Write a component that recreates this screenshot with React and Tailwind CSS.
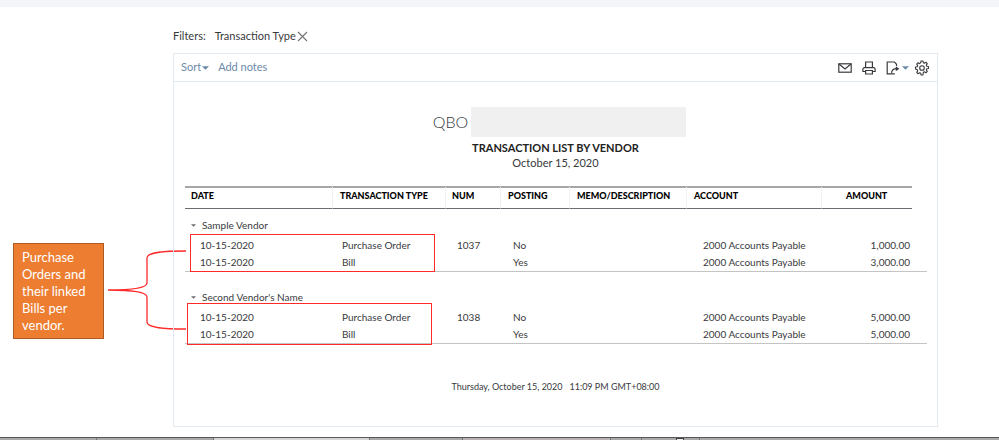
import React, { useState } from 'react';

const columns = [
  { key: 'date', label: 'DATE', width: 'w-[148px]', pad: 'pl-[6px]' },
  { key: 'type', label: 'TRANSACTION TYPE', width: 'w-[113px]', pad: 'pl-[7px]' },
  { key: 'num', label: 'NUM', width: 'w-[55px]', pad: 'pl-[6px]' },
  { key: 'posting', label: 'POSTING', width: 'w-[69px]', pad: 'pl-[7px]' },
  { key: 'memo', label: 'MEMO/DESCRIPTION', width: 'w-[117px]', pad: 'pl-[7px]' },
  { key: 'account', label: 'ACCOUNT', width: 'w-auto', pad: 'pl-[7px]' },
  { key: 'amount', label: 'AMOUNT', width: 'w-[90px]', pad: 'pl-[24px]' },
];

const vendors = [
  {
    name: 'Sample Vendor',
    labelPad: 'pt-2 pb-1',
    rows: [
      { date: '10-15-2020', type: 'Purchase Order', num: '1037', posting: 'No', account: '2000 Accounts Payable', amount: '1,000.00' },
      { date: '10-15-2020', type: 'Bill', num: '', posting: 'Yes', account: '2000 Accounts Payable', amount: '3,000.00' },
    ],
  },
  {
    name: "Second Vendor's Name",
    labelPad: 'pt-[17px] pb-1',
    rows: [
      { date: '10-15-2020', type: 'Purchase Order', num: '1038', posting: 'No', account: '2000 Accounts Payable', amount: '5,000.00' },
      { date: '10-15-2020', type: 'Bill', num: '', posting: 'Yes', account: '2000 Accounts Payable', amount: '5,000.00' },
    ],
  },
];

const Caret = ({ className }) => (
  <svg viewBox="0 0 8 4" className={className} aria-hidden="true">
    <path d="M0 0h8L4 4z" fill="currentColor" />
  </svg>
);

const MailIcon = () => (
  <svg width="14" height="10" viewBox="0 0 14 10" fill="none" stroke="currentColor" strokeWidth="1.2">
    <rect x="0.8" y="0.8" width="12.4" height="8.4" />
    <path d="M1 1l6 5 6-5" />
  </svg>
);

const PrintIcon = () => (
  <svg width="14" height="14" viewBox="0 0 14 14" fill="none" stroke="currentColor" strokeWidth="1.2">
    <path d="M3.600 6.500V1h6.800v5.500" />
    <path d="M3 10.500H.9V8.200a1.600 1.600 0 0 1 1.600-1.600h9a1.600 1.600 0 0 1 1.600 1.600v2.300H11" />
    <path d="M3.600 9.500h6.800V13H3.600z" />
  </svg>
);

const ExportIcon = () => (
  <svg width="14" height="14" viewBox="0 0 14 14" fill="none" stroke="currentColor" strokeWidth="1.2">
    <path d="M10.500 5V3.200L8.400 1H1.200v11.800h7.500" />
    <path d="M5.500 11.800c.4-2.800 2.200-4 5-4.100" />
    <path d="M9.800 5.200l3.600 2.500-3.600 2.500z" fill="currentColor" stroke="none" />
  </svg>
);

const GearIcon = () => (
  <svg width="16" height="16" viewBox="0 0 16 16" fill="none" stroke="currentColor" strokeWidth="1.1" strokeLinejoin="round">
    <path d="M6.700 2.700L7 1h2l.3 1.700 1.100.5 1.500-1 1.400 1.400-1 1.500.5 1.200 1.700.2v2l-1.700.3-.5 1.200 1 1.400-1.400 1.400-1.500-1-1.100.5L9 15H7l-.3-1.700-1.100-.5-1.500 1-1.400-1.400 1-1.400-.5-1.200L1.500 9V7l1.700-.2.500-1.200-1-1.500 1.400-1.400 1.500 1z" />
    <circle cx="8" cy="8" r="2.300" />
  </svg>
);

const Callout = () => (
  <aside className="relative w-[173px] shrink-0 pl-[13px] pt-[190px]">
    <p className="w-[91px] border border-[#ae5a21] bg-[#ed7d31] pl-2 pt-[5px] pb-[4px] text-[13px] leading-[17px] text-white">
      Purchase Orders and their linked Bills per vendor.
    </p>
    <svg
      className="absolute left-[107px] top-[197px]"
      width="79"
      height="80"
      viewBox="0 0 79 80"
      fill="none"
      stroke="#ff2a2a"
      strokeWidth="1.3"
      aria-hidden="true"
    >
      <path d="M79 1C58 1 40 2 40 8v25c0 5-15 7-39 7 24 0 39 2 39 7v25c0 6 18 7 39 7" />
    </svg>
  </aside>
);

const Toolbar = () => (
  <div className="flex h-[28px] items-center border-b border-[#e3e9f3] px-[7px] text-[11px] text-[#6b8aa8]">
    <button className="flex items-center">
      Sort
      <Caret className="ml-px h-[4px] w-[7px]" />
    </button>
    <button className="ml-[9px]">Add notes</button>
    <div className="ml-auto flex items-center text-[#393a3d]">
      <button aria-label="Email"><MailIcon /></button>
      <button aria-label="Print" className="ml-[10px]"><PrintIcon /></button>
      <button aria-label="Export" className="ml-[10px] flex items-center">
        <ExportIcon />
        <Caret className="ml-[2px] h-[4px] w-[7px] text-[#6b8aa8]" />
      </button>
      <button aria-label="Settings" className="ml-[5px]"><GearIcon /></button>
    </div>
  </div>
);

const ReportTable = () => {
  const [closed, setClosed] = useState({});

  const toggle = (name) => {
    setClosed({ ...closed, [name]: !closed[name] });
  };

  return (
    <table className="w-full table-fixed border-separate border-spacing-0 text-[10px] leading-[16px] text-[#393a3d]">
      <thead>
        <tr className="h-[23px] text-left text-[9px] text-black">
          {columns.map((col, index) => (
            <th
              key={col.key}
              className={`border-t-2 border-b border-t-[#a6a6a6] border-b-[#6b6c72] p-0 pb-[4px] align-middle font-black whitespace-nowrap ${col.width} ${col.pad} ${index < columns.length - 1 ? 'border-r border-r-[#e4e4e4] [border-right-style:dotted]' : ''}`}
            >
              {col.label}
            </th>
          ))}
          <td className="w-[15px] p-0"></td>
        </tr>
      </thead>
      {vendors.map((vendor) => (
        <tbody key={vendor.name}>
          <tr>
            <td colSpan="8" className={`pl-[6px] ${vendor.labelPad}`}>
              <button className="flex items-center" onClick={() => toggle(vendor.name)}>
                <Caret className="mr-[6px] h-[3px] w-[5px] text-[#6b6c72]" />
                {vendor.name}
              </button>
            </td>
          </tr>
          {!closed[vendor.name] && vendor.rows.map((row, index) => {
            const line = index === vendor.rows.length - 1 ? 'border-b border-[#c4c4c4]' : '';
            return (
              <tr key={index}>
                <td className={`p-0 pb-px pl-[15px] ${line}`}>{row.date}</td>
                <td className={`p-0 pb-px pl-[9px] ${line}`}>{row.type}</td>
                <td className={`p-0 pb-px pl-[11px] ${line}`}>{row.num}</td>
                <td className={`p-0 pb-px pl-[12px] ${line}`}>{row.posting}</td>
                <td className={`p-0 ${line}`}></td>
                <td className={`p-0 pb-px pl-4 ${line}`}>{row.account}</td>
                <td className={`p-0 pb-px pr-[2px] text-right ${line}`}>{row.amount}</td>
                <td className={`p-0 ${line}`}></td>
              </tr>
            );
          })}
        </tbody>
      ))}
    </table>
  );
};

const Report = () => (
  <section className="relative border border-[#e3e9f3]">
    <Toolbar />
    <div className="pt-[25px] text-center text-[#393a3d]">
      <h1 className="flex items-center justify-center gap-[3px] pl-2 text-[16px] leading-[30px] font-light">
        QBO
        <span className="h-[30px] w-[215px] bg-[#f0f0f0]"></span>
      </h1>
      <h2 className="pt-[3px] text-[11px] leading-[15px] font-bold text-[#222]">TRANSACTION LIST BY VENDOR</h2>
      <p className="text-[11px] leading-[15px]">October 15, 2020</p>
    </div>
    <div className="relative pt-4 pr-[10px] pl-[11px]">
      <ReportTable />
      {/* highlight frames over the linked transactions */}
      <div className="absolute left-[16px] top-[64px] h-[38px] w-[245px] border border-[#ff2a2a]"></div>
      <div className="absolute left-[13px] top-[133px] h-[42px] w-[245px] border border-[#ff2a2a]"></div>
    </div>
    <footer className="pt-[35px] pb-[31px] text-center text-[9px] leading-[16px] text-[#393a3d]">
      Thursday, October 15, 2020 &nbsp; 11:09 PM GMT+08:00
    </footer>
  </section>
);

const App = () => (
  <div className="bg-white font-['Lato',sans-serif]">
    <div className="h-[7px] bg-[#f4f5f9]"></div>
    <div className="flex h-[46px] items-center pt-[12px] pl-[173px] text-[11px] text-[#393a3d]">
      <span>Filters:</span>
      <span className="ml-[9px]">Transaction Type</span>
      <button aria-label="Remove filter" className="ml-px text-[#777]">
        <svg width="11" height="11" viewBox="0 0 11 11" fill="none" stroke="currentColor" strokeWidth="1.2">
          <path d="M1 1l9 9M10 1l-9 9" />
        </svg>
      </button>
    </div>
    <main className="flex">
      <Callout />
      <div className="mr-[61px] min-w-0 grow">
        <Report />
      </div>
    </main>
    <div className="mt-[10px] flex h-[3px] border-t border-[#58585a] bg-[#a9a9ab]">
      <span className="w-[97px] border-r border-[#77777a]"></span>
      <span className="w-[117px] border-r border-[#77777a]"></span>
      <span className="w-[156px] border-r border-[#77777a] bg-[#d6d6d6]"></span>
      <span className="w-[93px] border-r border-[#77777a]"></span>
      <span className="w-[148px] border-r border-[#77777a] bg-[#b9b3b5]"></span>
      <span className="w-[31px] border-r border-[#77777a]"></span>
      <span className="w-[34px]"></span>
      <span className="w-[8px] border border-b-0 border-[#444] bg-[#eee]"></span>
      <span className="w-[16px] border-r border-[#77777a]"></span>
    </div>
  </div>
);

export default App;
